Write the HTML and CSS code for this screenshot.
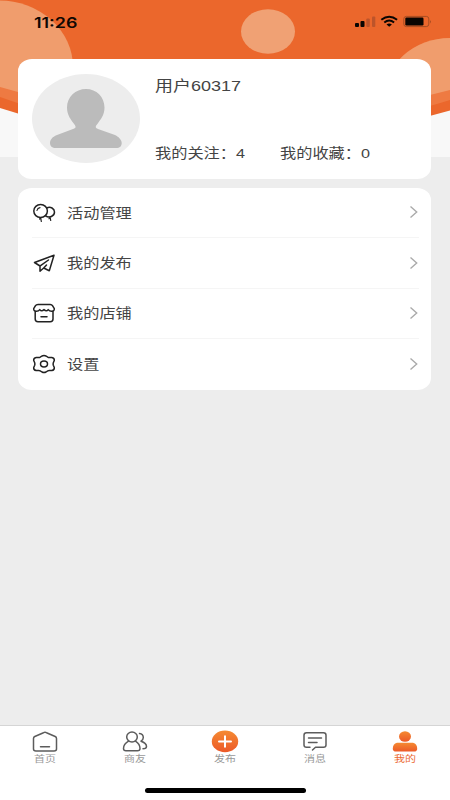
FILE: index.html
```html
<!DOCTYPE html>
<html lang="zh-CN">
<head>
<meta charset="utf-8">
<title>我的</title>
<link rel="stylesheet" href="styles.css">
</head>
<body>
<div class="app">
  <svg class="backdrop" viewBox="0 0 450 157" width="450" height="157" aria-hidden="true">
    <defs>
      <clipPath id="wave"><path d="M0 0H450V90Q410 101 370 104H80Q40 99 0 87Z"/></clipPath>
      <clipPath id="wave2"><path d="M0 0H450V100Q425 108 390 116H60Q30 108 0 97Z"/></clipPath>
    </defs>
    <rect width="450" height="157" fill="#f8f8f8"/>
    <path d="M0 0H450V110.500Q410 122 370 128H80Q40 121 0 108Z" fill="#eb672c"/>
    <g clip-path="url(#wave2)" fill="#ee7a42"><ellipse cx="-1" cy="70" rx="74" ry="69"/><ellipse cx="450" cy="98" rx="66" ry="60"/></g>
    <g clip-path="url(#wave)" fill="#f09d6d"><ellipse cx="-1" cy="67" rx="74" ry="66.500"/><ellipse cx="450" cy="98" rx="66" ry="60"/></g>
    <ellipse cx="268" cy="31.500" rx="27" ry="22.300" fill="#f0a174"/>
  </svg>

  <header class="status">
    <span class="clock">11:26</span>
    <svg class="signals" width="78" height="14" viewBox="0 0 78 14">
      <g fill="#090502"><rect x="1" y="8" width="4" height="4" rx="1"/><rect x="6.500" y="6" width="4" height="6" rx="1"/></g>
      <g fill="#bd542a"><rect x="12.300" y="3.500" width="3.500" height="8.500" rx="1"/><rect x="18" y="1.500" width="3.300" height="10.500" rx="1"/></g>
      <g fill="none" stroke="#090502" stroke-width="2"><path d="M27.300 4.800Q35.200-1.400 43.100 4.800"/><path d="M30.300 7.500Q35.200 3.500 40.100 7.500"/></g>
      <path d="M32.500 9.400Q35.200 7.600 37.900 9.400L35.200 11.700Z" fill="#090502"/>
      <rect x="49.800" y="1.400" width="25" height="10.200" rx="2.500" fill="none" stroke="#a64d22"/>
      <rect x="51.300" y="2.600" width="18.200" height="7.800" rx="1.200" fill="#090502"/>
      <path d="M76.200 5v3.400q1.500-1.700 0-3.400" fill="#8c401d"/>
    </svg>
  </header>

  <main class="content">
    <section class="card profile">
      <svg class="avatar" width="108" height="89" viewBox="0 0 108 89">
        <ellipse cx="54" cy="44.500" rx="54" ry="44.500" fill="#ededed"/>
        <path d="M54 15C43.500 15 35 23 35 33.500C35 41 39 46 42.500 50.500C44.500 53.500 43.500 54 41 55L25 61C20 63 18 66 18 69C18 72 20 74 24 74H84C88 74 89.700 72 89.700 69C89.700 66 87 63 83 61L66 55C63.500 54 63 53 65 50.500C69 45 72.500 41 72.500 33.500C72.500 23 64.500 15 54 15Z" fill="#bbb"/>
      </svg>
      <div class="info">
        <h1 class="name"><span class="wide">用户60317</span></h1>
        <div class="stats">
          <span class="stat"><span class="wide">我的关注：4</span></span>
          <span class="stat"><span class="wide">我的收藏：0</span></span>
        </div>
      </div>
    </section>

    <nav class="card menu">
      <a class="row">
        <svg class="icon" width="24" height="22" viewBox="0 0 24 22"><ellipse cx="8.600" cy="9" rx="6.800" ry="6.500"/><path d="M14.700 6C18.500 4.100 22.500 6.500 22.500 10C22.500 14.200 17.200 16.500 13.400 13.600"/><path class="fine" d="M5 8.500Q5.500 6 8 5.600M8.600 15.800L7.600 17M8.800 16.300L9.300 19.500M17.800 15.500L17 16.800M18.300 16L18.700 18.500"/></svg>
        <span class="label"><span class="wide">活动管理</span></span>
        <svg class="chevron" width="10" height="14" viewBox="0 0 10 14"><path d="M1.500 1.500L7.700 7L1.500 12.500"/></svg>
      </a>
      <a class="row">
        <svg class="icon" width="24" height="22" viewBox="0 0 24 22"><path d="M22 3.200L2.500 10.500L8 14V19.200L11.700 16L17.300 18.700L22 3.200ZM8.200 13.800L16.500 8M11.700 16L14.500 13"/></svg>
        <span class="label"><span class="wide">我的发布</span></span>
        <svg class="chevron" width="10" height="14" viewBox="0 0 10 14"><path d="M1.500 1.500L7.700 7L1.500 12.500"/></svg>
      </a>
      <a class="row">
        <svg class="icon" width="24" height="22" viewBox="0 0 24 22"><path d="M6 2.400H18.200Q19.800 2.400 20.500 3.600L22.300 6.600Q22.500 9 20 9.200Q17.600 9.400 16.200 7.600Q14.500 10 12 7.600Q9.500 10 7.800 7.600Q6.400 9.400 4 9.200Q1.500 9 1.700 6.600L3.500 3.600Q4.200 2.400 6 2.400ZM3.200 9.200V17Q3.200 19.700 6 19.700H18.200Q21 19.700 21 17V9.200M9 14.800H15"/></svg>
        <span class="label"><span class="wide">我的店铺</span></span>
        <svg class="chevron" width="10" height="14" viewBox="0 0 10 14"><path d="M1.500 1.500L7.700 7L1.500 12.500"/></svg>
      </a>
      <a class="row">
        <svg class="icon" width="24" height="22" viewBox="0 0 24 22"><path d="M10 3Q12 1.800 14 3L15.800 4.200Q16.800 4.800 18 4.500L19.800 4.400Q22.600 5 22.300 7.500L21.300 9.800Q20.900 11 21.300 12.200L22.300 14.500Q22.600 17 19.800 17.600L18 17.500Q16.800 17.200 15.800 17.800L14 19Q12 20.200 10 19L8.200 17.800Q7.200 17.200 6 17.500L4.200 17.600Q1.400 17 1.700 14.500L2.700 12.200Q3.100 11 2.700 9.800L1.700 7.500Q1.400 5 4.200 4.400L6 4.500Q7.200 4.800 8.200 4.200Z"/><ellipse cx="12" cy="11" rx="3.500" ry="2.900"/></svg>
        <span class="label"><span class="wide">设置</span></span>
        <svg class="chevron" width="10" height="14" viewBox="0 0 10 14"><path d="M1.500 1.500L7.700 7L1.500 12.500"/></svg>
      </a>
    </nav>
  </main>

  <footer class="tabbar">
    <div class="tabs">
      <a class="tab">
        <svg class="tab-icon" width="28" height="24" viewBox="0 0 28 24"><path d="M12.500 2.700Q14 1.900 15.500 2.700L24.200 6.500Q25.500 7.200 25.500 8.500V19Q25.500 21 23 21H5Q2.500 21 2.500 19V8.500Q2.500 7.200 3.800 6.500ZM9.500 16.700H18.500"/></svg>
        <span class="wide">首页</span>
      </a>
      <a class="tab">
        <svg class="tab-icon" width="28" height="24" viewBox="0 0 28 24"><ellipse cx="11" cy="7" rx="5.300" ry="5"/><path d="M7.500 11.100Q2.500 14 2.500 18.500Q2.500 20.800 5 20.800H16.500Q19 20.800 19 18.500Q19 14 14.500 11.100M18.500 3.500Q22.300 4 22.300 7.500Q22.300 9.700 20 11.200Q25.500 13 25.500 16.500Q25.500 18.800 22 18.800"/></svg>
        <span class="wide">商友</span>
      </a>
      <a class="tab">
        <svg class="tab-icon" width="28" height="24" viewBox="0 0 28 24"><defs><linearGradient id="warm" x2="0" y2="1"><stop stop-color="#f58a32"/><stop offset="1" stop-color="#ec5928"/></linearGradient></defs><ellipse class="solid" cx="14" cy="11.400" rx="13.200" ry="10.800"/><path class="plus" d="M8 11.400H20M14 6.200V16.700"/></svg>
        <span class="wide">发布</span>
      </a>
      <a class="tab">
        <svg class="tab-icon" width="28" height="24" viewBox="0 0 28 24"><path d="M9 17.300H5.500Q3 17.300 3 15V5.200Q3 2.800 5.500 2.800H22.500Q25 2.800 25 5.200V15Q25 17.300 22.500 17.300H14.500L11.500 20M7.500 8H20.500M7.500 12.500H16"/></svg>
        <span class="wide">消息</span>
      </a>
      <a class="tab active">
        <svg class="tab-icon" width="28" height="24" viewBox="0 0 28 24"><ellipse class="solid" cx="14" cy="6.500" rx="6" ry="5.200"/><path class="solid" d="M6 12.800H22Q26.200 13.800 26.200 18.800Q26.200 21.600 23 21.600H5Q1.800 21.600 1.800 18.800Q1.800 13.800 6 12.800Z"/></svg>
        <span class="wide">我的</span>
      </a>
    </div>
    <div class="home-indicator"></div>
  </footer>
</div>
</body>
</html>
```
FILE: styles.css
```css
* {
  box-sizing: border-box;
}

body {
  margin: 0;
  font-family: "Liberation Sans", "Noto Sans CJK SC", sans-serif;
  color: #444;
}

.app {
  position: relative;
  display: flex;
  flex-direction: column;
  width: 450px;
  height: 800px;
  overflow: hidden;
  background: #ededed;
}

.backdrop {
  position: absolute;
  top: 0;
  left: 0;
}

.status,
.content,
.tabbar {
  position: relative;
}

.wide {
  display: inline-block;
  transform: scaleX(1.2);
  transform-origin: left center;
  white-space: nowrap;
}

.status {
  display: flex;
  justify-content: space-between;
  align-items: center;
  height: 59px;
  padding: 0 18px 15px 34px;
}

.clock {
  font-family: Inter, sans-serif;
  font-size: 14.3px;
  font-weight: 600;
  color: #100803;
  transform: scaleX(1.25);
  transform-origin: left center;
}

.content {
  display: flex;
  flex: 1;
  flex-direction: column;
  gap: 9.500px;
  padding: 0 18.600px 0 18.400px;
}

.card {
  background: #fff;
  border-radius: 14px / 12px;
}

.profile {
  display: flex;
  height: 119.500px;
  padding: 15px 14px;
  gap: 14.500px;
}

.avatar {
  flex: none;
}

.info {
  display: flex;
  flex: 1;
  flex-direction: column;
  justify-content: space-between;
}

.name {
  margin: 1px 0 0;
  font-size: 15px;
  font-weight: 400;
  line-height: 22px;
}

.stats {
  display: flex;
  font-size: 13.500px;
  line-height: 20px;
}

.stat {
  width: 125px;
}

.menu {
  height: 201.500px;
  padding: 0 12px 0 13.500px;
}

.row {
  display: flex;
  align-items: center;
  height: 50.400px;
  border-bottom: 1px solid #f5f5f5;
}

.row:last-child {
  border-bottom: 0;
}

.icon {
  margin-right: 11px;
  fill: none;
  stroke: #222;
  stroke-width: 1.5;
  stroke-linejoin: round;
  stroke-linecap: round;
}

.icon .fine {
  stroke-width: 1.2;
}

.label {
  flex: 1;
  margin-top: 2px;
  font-size: 13.500px;
  line-height: 20px;
}

.chevron {
  margin-bottom: 1px;
  fill: none;
  stroke: #aaa;
  stroke-width: 1.4;
}

.tabbar {
  display: flex;
  flex-direction: column;
  align-items: center;
  justify-content: space-between;
  height: 75.500px;
  padding: 4px 0 7px;
  background: #fff;
  border-top: 1.500px solid #d5d5d5;
}

.tabs {
  display: flex;
  width: 100%;
}

.tab {
  display: flex;
  flex: 1;
  flex-direction: column;
  align-items: center;
  font-size: 9px;
  line-height: 11px;
  color: #999;
}

.tab .wide {
  transform: scaleX(1.22);
  transform-origin: center;
}

.tab-icon {
  fill: none;
  stroke: #5c5c5c;
  stroke-width: 1.5;
  stroke-linecap: round;
  stroke-linejoin: round;
}

.tab-icon .solid {
  fill: url(#warm);
  stroke: none;
}

.tab-icon .plus {
  stroke: #fff;
  stroke-width: 2;
}

.active {
  color: #ec6b33;
}

.home-indicator {
  width: 161px;
  height: 5px;
  border-radius: 3px;
  background: #000;
}
```
